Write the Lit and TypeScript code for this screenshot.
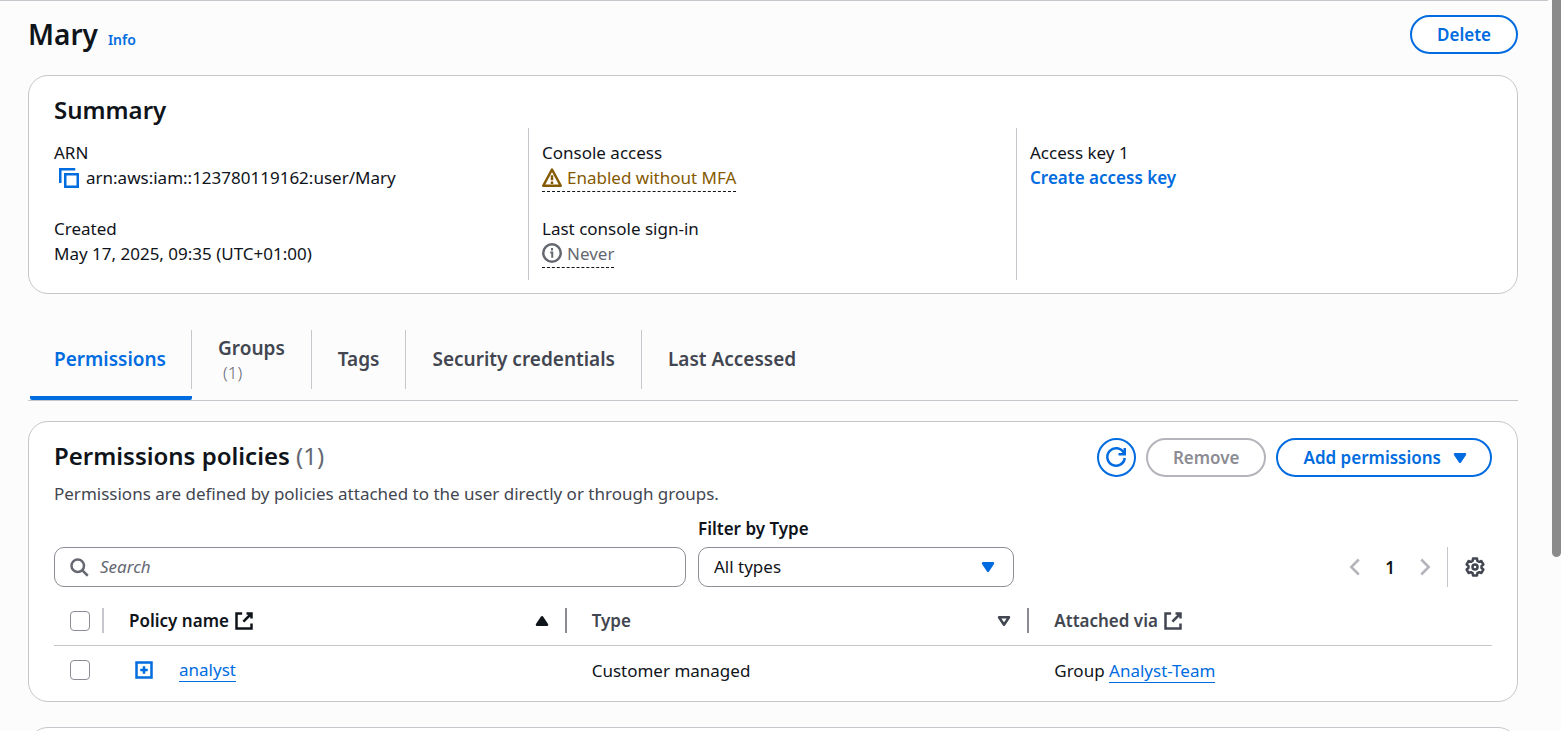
import { LitElement, html, css, svg, nothing } from "lit";
import { customElement, property } from "lit/decorators.js";

const polar = (r: number, deg: number) => {
  const a = (deg * Math.PI) / 180;
  return `${(8 + r * Math.sin(a)).toFixed(2)} ${(8 - r * Math.cos(a)).toFixed(2)}`;
};

const gearPath = () => {
  const pts: string[] = [];
  for (let i = 0; i < 6; i++) {
    const c = i * 60;
    pts.push(polar(5.3, c - 21), polar(7, c - 13), polar(7, c + 13), polar(5.3, c + 21));
  }
  return `M${pts.join("L")}Z`;
};

const glyphs: Record<string, unknown> = {
  copy: svg`<path d="M15 5H5v10h10V5Z"/><path d="M13 1H1v11"/>`,
  warning: svg`<path stroke-linejoin="round" d="M8 2 15 15H1L8 2Z"/><path d="M8 6.5v4M8 11.5v2"/>`,
  info: svg`<circle cx="8" cy="8" r="7"/><path stroke-width="1.6" d="M8.2 11.8V7.6H6.6M8 4v2"/>`,
  refresh: svg`<path d="M10 5h5V0"/><path d="M15 8a7 7 0 1 1-.7-4"/>`,
  search: svg`<circle cx="7" cy="7" r="5"/><path d="m15 15-4.5-4.5"/>`,
  external: svg`<path d="M10 2h4v4M7.5 8.5 14 2"/><path d="M14 10v4H2V2h4.5"/>`,
  plus: svg`<path d="M2 2h12v12H2V2Z"/><path d="M8 5v6M5 8h6"/>`,
  down: svg`<path stroke-linejoin="round" fill="currentColor" d="M4 5h8l-4 6-4-6Z"/>`,
  up: svg`<path stroke-linejoin="round" fill="currentColor" d="M4 11h8L8 5l-4 6Z"/>`,
  sort: svg`<path stroke-linejoin="round" d="M4 5h8l-4 6-4-6Z"/>`,
  left: svg`<path d="M11 2 5 8l6 6"/>`,
  right: svg`<path d="m5 2 6 6-6 6"/>`,
  gear: svg`<path stroke-linejoin="round" d=${gearPath()}/><circle cx="8" cy="8" r="2"/>`,
};

@customElement("ui-icon")
class UiIcon extends LitElement {
  static styles = css`
    :host {
      display: inline-flex;
      flex: none;
      width: 20px;
      height: 20px;
    }
    .glyph {
      width: 100%;
      height: 100%;
      overflow: visible;
      fill: none;
      stroke: currentColor;
      stroke-width: 2;
    }
  `;
  @property() name = "";
  render() {
    return html`<svg class="glyph" viewBox="0 0 16 16" aria-hidden="true">${glyphs[this.name] ?? nothing}</svg>`;
  }
}

const tabs = [
  { label: "Permissions", active: true },
  { label: "Groups", count: 1 },
  { label: "Tags" },
  { label: "Security credentials" },
  { label: "Last Accessed" },
];

@customElement("app-root")
class AppRoot extends LitElement {
  static styles = css`
    :host {
      --blue: #006ce0;
      --ink: #0f141a;
      --muted: #424650;
      --line: #c6c6cd;
      --field: #8c8c94;
      display: flex;
      height: 100vh;
      overflow: hidden;
      background: #fcfcfd;
      color: var(--ink);
      font: 17px/25px "Noto Sans", "Open Sans", sans-serif;
    }
    * {
      box-sizing: border-box;
    }
    h1, h2, p, dl, dd, dt {
      margin: 0;
    }
    button, input, select {
      font: inherit;
      color: inherit;
      margin: 0;
    }
    a {
      color: var(--blue);
      text-decoration: none;
    }
    .page {
      flex: 1;
      min-width: 0;
      margin-right: 4px;
      padding: 14px 30px 0 28px;
      border-top: 1px solid var(--line);
    }
    .scroll {
      flex: none;
      width: 9px;
    }
    .thumb {
      height: 76.2vh;
      background: #8b8b8b;
      border-radius: 0 0 5px 5px;
    }
    .top {
      display: flex;
      justify-content: space-between;
      align-items: flex-start;
      margin-bottom: 21px;
    }
    .name {
      display: flex;
      align-items: baseline;
      gap: 10px;
    }
    h1 {
      font-size: 28px;
      line-height: 39px;
      font-weight: 600;
    }
    h2 {
      font-size: 24px;
      line-height: 30px;
      font-weight: 600;
    }
    .info {
      font-size: 14px;
      font-weight: 600;
    }
    .btn {
      display: inline-flex;
      align-items: center;
      justify-content: center;
      gap: 9px;
      height: 39px;
      padding: 0 25px;
      border: 2px solid currentColor;
      border-radius: 20px;
      background: #fff;
      color: var(--blue);
      font-weight: 600;
    }
    .btn:disabled {
      color: #8c8c94;
      border-color: #b4b4bb;
    }
    .menu {
      padding-right: 20px;
    }
    .round {
      width: 39px;
      padding: 0;
    }
    .card {
      background: #fff;
      border: 1px solid var(--line);
      border-radius: 20px;
    }
    .summary {
      padding: 19px 13px 13px 11px;
    }
    .summary h2 {
      padding-left: 14px;
      margin-bottom: 3px;
    }
    .cols {
      display: grid;
      grid-template-columns: repeat(3, 1fr);
    }
    .col {
      display: flex;
      flex-direction: column;
      gap: 26px;
      padding: 12px 13px 14px;
      border-left: 1px solid var(--line);
    }
    .col:first-child {
      border-color: transparent;
    }
    .value {
      display: flex;
      align-items: center;
      height: 25px;
    }
    .copy {
      display: inline-flex;
      padding: 0 7px 0 5px;
      border: 0;
      background: none;
      color: var(--blue);
    }
    .status {
      display: inline-flex;
      align-items: center;
      gap: 5px;
      border-bottom: 1px dashed var(--ink);
      height: 27px;
      margin-top: 2px;
      padding-bottom: 2px;
    }
    .warn {
      color: #855900;
    }
    .quiet {
      color: #656871;
    }
    .strong {
      font-weight: 600;
    }
    .tabs {
      display: flex;
      margin: 23px 0 20px;
      padding-top: 13px;
      border-bottom: 1px solid var(--line);
    }
    .tab {
      display: flex;
      flex-direction: column;
      padding: 0 0 7px;
      border: 0;
      border-bottom: 4px solid transparent;
      border-radius: 2px;
      background: none;
      color: var(--muted);
      font-size: 19px;
      font-weight: 600;
      text-align: left;
    }
    .face {
      display: flex;
      flex-direction: column;
      justify-content: center;
      height: 59px;
      padding: 0 26px;
      border-right: 1px solid var(--line);
    }
    .tab:last-child .face {
      border-color: transparent;
    }
    .tab:first-child {
      margin-left: 2px;
    }
    .tab:first-child .face {
      padding: 0 25px 0 24px;
    }
    .tab.on {
      color: var(--blue);
      border-color: var(--blue);
    }
    .count {
      padding-left: 5px;
      font-size: 17px;
      line-height: 23px;
      font-weight: 300;
      color: #656871;
    }
    .policies {
      padding: 16px 25px 7px;
      margin-bottom: 25px;
    }
    .head {
      display: flex;
      justify-content: space-between;
      align-items: flex-start;
    }
    .head h2 {
      line-height: 36px;
      margin-bottom: 7px;
    }
    .total {
      font-weight: 400;
      color: #656871;
    }
    .desc {
      color: var(--muted);
    }
    .actions {
      display: flex;
      gap: 10px;
    }
    .tools {
      display: flex;
      justify-content: space-between;
      align-items: flex-end;
      gap: 12px;
      margin: 10px 0 9px;
    }
    .filters {
      flex: 0 1 960px;
      display: flex;
      align-items: flex-end;
      gap: 12px;
    }
    .search {
      flex: 2 1 0;
    }
    .type {
      flex: 1 1 0;
    }
    .type label {
      display: block;
      font-weight: 600;
      margin-bottom: 6px;
    }
    .box {
      display: grid;
      align-items: center;
    }
    .box > * {
      grid-area: 1 / 1;
    }
    .field {
      width: 100%;
      height: 40px;
      border: 1px solid var(--field);
      border-radius: 10px;
      background: #fff;
      appearance: none;
      padding: 0 15px 2px;
      outline: none;
    }
    .search .field {
      padding-left: 45px;
    }
    .field::placeholder {
      color: #656871;
      font-style: italic;
      opacity: 1;
    }
    .box ui-icon {
      z-index: 1;
      pointer-events: none;
    }
    .search ui-icon {
      margin-left: 15px;
      color: #656871;
    }
    .type ui-icon {
      justify-self: end;
      margin-right: 16px;
      color: var(--blue);
    }
    .pager {
      display: flex;
      align-items: center;
      height: 40px;
    }
    .ib {
      display: inline-flex;
      padding: 0;
      border: 0;
      background: none;
      color: #b4b4bb;
    }
    .num {
      width: 50px;
      text-align: center;
      font-weight: 600;
      padding: 0;
      border: 0;
      background: none;
    }
    .gear {
      height: 40px;
      align-items: center;
      margin-left: 12px;
      padding: 0 7px 0 17px;
      border-left: 1px solid var(--line);
      color: var(--muted);
    }
    table {
      width: 100%;
      table-layout: fixed;
      border-collapse: separate;
      border-spacing: 0;
    }
    th, td {
      padding: 0;
      text-align: left;
      font-weight: 400;
    }
    th {
      height: 50px;
      border-bottom: 1px solid var(--line);
      color: var(--muted);
      font-weight: 600;
    }
    td {
      height: 48px;
      padding-left: 25px;
    }
    .pick {
      width: 50px;
      padding-left: 16px;
    }
    .cell {
      display: flex;
      align-items: center;
      gap: 5px;
      height: 25px;
      padding: 0 13px 0 25px;
      border-right: 2px solid var(--field);
    }
    .pick .cell {
      padding: 0;
      border-color: var(--line);
    }
    .cell.last {
      border-color: transparent;
    }
    .sorted {
      color: var(--ink);
    }
    .push {
      margin-left: auto;
    }
    .check {
      display: block;
      appearance: none;
      width: 20px;
      height: 20px;
      border: 1px solid var(--field);
      border-radius: 4px;
      background: #fff;
    }
    .entry {
      display: flex;
      align-items: center;
      gap: 25px;
      padding-left: 5px;
    }
    .expand {
      color: var(--blue);
    }
    .link {
      display: inline-block;
      line-height: 22px;
      border-bottom: 1px solid var(--blue);
    }
    .next {
      height: 200px;
    }
  `;

  render() {
    return html`
      <main class="page">
        <header class="top">
          <div class="name">
            <h1>Mary</h1>
            <a class="info" href="#info">Info</a>
          </div>
          <button class="btn">Delete</button>
        </header>

        <section class="card summary">
          <h2>Summary</h2>
          <div class="cols">
            <dl class="col">
              <div>
                <dt>ARN</dt>
                <dd class="value">
                  <button class="copy" aria-label="Copy ARN"><ui-icon name="copy"></ui-icon></button>
                  <span>arn:aws:iam::123780119162:user/Mary</span>
                </dd>
              </div>
              <div>
                <dt>Created</dt>
                <dd class="value">May 17, 2025, 09:35 (UTC+01:00)</dd>
              </div>
            </dl>
            <dl class="col">
              <div>
                <dt>Console access</dt>
                <dd class="value"><span class="status warn"><ui-icon name="warning"></ui-icon>Enabled without MFA</span></dd>
              </div>
              <div>
                <dt>Last console sign-in</dt>
                <dd class="value"><span class="status quiet"><ui-icon name="info"></ui-icon>Never</span></dd>
              </div>
            </dl>
            <dl class="col">
              <div>
                <dt>Access key 1</dt>
                <dd class="value"><a class="strong" href="#create-key">Create access key</a></dd>
              </div>
            </dl>
          </div>
        </section>

        <nav class="tabs" role="tablist">
          ${tabs.map(
            (t) => html`<button class="tab ${t.active ? "on" : ""}" role="tab" aria-selected=${t.active ? "true" : "false"}>
              <span class="face"><span>${t.label}</span>${t.count ? html`<span class="count">(${t.count})</span>` : nothing}</span>
            </button>`
          )}
        </nav>

        <section class="card policies">
          <div class="head">
            <div>
              <h2>Permissions policies <span class="total">(1)</span></h2>
              <p class="desc">Permissions are defined by policies attached to the user directly or through groups.</p>
            </div>
            <div class="actions">
              <button class="btn round" aria-label="Refresh"><ui-icon name="refresh"></ui-icon></button>
              <button class="btn" disabled>Remove</button>
              <button class="btn menu">Add permissions <ui-icon name="down"></ui-icon></button>
            </div>
          </div>

          <div class="tools">
            <div class="filters">
              <div class="search box">
                <input class="field" type="search" placeholder="Search" aria-label="Search policies" />
                <ui-icon name="search"></ui-icon>
              </div>
              <div class="type">
                <label for="type">Filter by Type</label>
                <div class="box">
                  <select class="field" id="type"><option>All types</option></select>
                  <ui-icon name="down"></ui-icon>
                </div>
              </div>
            </div>
            <div class="pager">
              <button class="ib" aria-label="Previous page"><ui-icon name="left"></ui-icon></button>
              <button class="num" aria-label="Page 1">1</button>
              <button class="ib" aria-label="Next page"><ui-icon name="right"></ui-icon></button>
              <button class="ib gear" aria-label="Preferences"><ui-icon name="gear"></ui-icon></button>
            </div>
          </div>

          <table>
            <thead>
              <tr>
                <th class="pick"><div class="cell"><input class="check" type="checkbox" aria-label="Select all" /></div></th>
                <th><div class="cell sorted">Policy name <ui-icon name="external"></ui-icon><ui-icon class="push" name="up"></ui-icon></div></th>
                <th><div class="cell">Type <ui-icon class="push" name="sort"></ui-icon></div></th>
                <th><div class="cell last">Attached via <ui-icon name="external"></ui-icon></div></th>
              </tr>
            </thead>
            <tbody>
              <tr>
                <td class="pick"><input class="check" type="checkbox" aria-label="Select analyst" /></td>
                <td>
                  <div class="entry">
                    <button class="ib expand" aria-label="Expand analyst"><ui-icon name="plus"></ui-icon></button>
                    <a class="link" href="#analyst">analyst</a>
                  </div>
                </td>
                <td>Customer managed</td>
                <td>Group <a class="link" href="#analyst-team">Analyst-Team</a></td>
              </tr>
            </tbody>
          </table>
        </section>

        <section class="card next"></section>
      </main>
      <div class="scroll"><div class="thumb"></div></div>
    `;
  }
}
